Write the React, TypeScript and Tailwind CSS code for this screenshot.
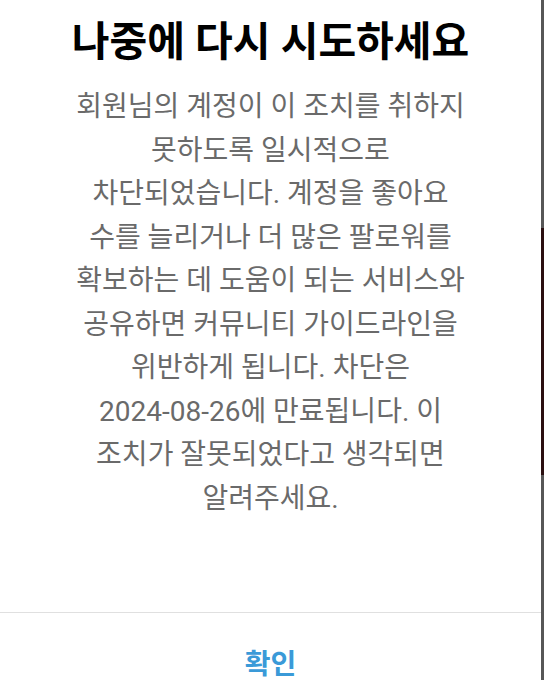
const bodyLines = [
  '회원님의 계정이 이 조치를 취하지',
  '못하도록 일시적으로',
  '차단되었습니다. 계정을 좋아요',
  '수를 늘리거나 더 많은 팔로워를',
  '확보하는 데 도움이 되는 서비스와',
  '공유하면 커뮤니티 가이드라인을',
  '위반하게 됩니다. 차단은',
  '2024-08-26에 만료됩니다. 이',
  '조치가 잘못되었다고 생각되면',
  '알려주세요.',
];

export default function App() {
  return (
    <div
      className="flex h-[680px] w-[544px] overflow-hidden bg-white"
      style={{ fontFamily: "Roboto, 'Noto Sans CJK KR', sans-serif" }}
    >
      <div className="flex h-[712px] w-[541px] shrink-0 flex-col bg-white">
        <h1 className="pt-[18px] text-center text-[41px] font-bold leading-[48px] text-black">
          나중에 다시 시도하세요
        </h1>
        <div className="mt-[19px] flex flex-col items-center text-[28px] leading-[43.5px] text-[#6a6a6a]">
          {bodyLines.map((line) => (
            <p key={line} className="whitespace-nowrap">
              {line}
            </p>
          ))}
        </div>
        <div className="mt-auto border-t border-[#e0e0e0]">
          <button
            type="button"
            className="flex h-[99px] w-full items-center justify-center pt-[4px] text-[28px] font-semibold text-[#3a9ad8]"
          >
            확인
          </button>
        </div>
      </div>
      <div className="flex w-[3px] flex-col">
        <div className="h-[228px] bg-[#575757]" />
        <div className="h-[247px] bg-[#2a0f10]" />
        <div className="flex-1 bg-[#575757]" />
      </div>
    </div>
  );
}
